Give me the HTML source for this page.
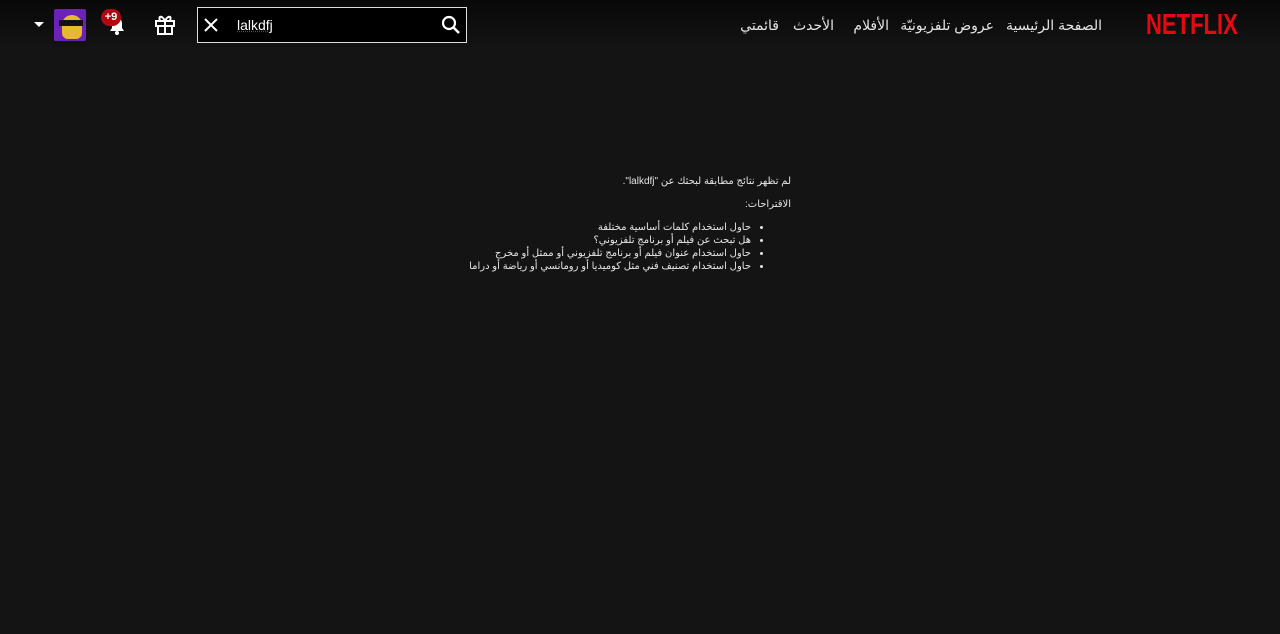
<!DOCTYPE html>
<html dir="rtl"><head><meta charset="utf-8"><style>
body{margin:0;width:1280px;height:634px;background:#141414;font-family:"Liberation Sans","DejaVu Sans",sans-serif;color:#e5e5e5;overflow:hidden;position:relative}
.hdr{position:absolute;top:0;left:0;width:1280px;height:50px;background:linear-gradient(#080808,#141414)}
.logo{position:absolute;right:42px;top:9px;color:#e50914;font-weight:bold;font-size:29px;font-family:"Liberation Sans Narrow","Liberation Sans",sans-serif;direction:ltr;transform:scaleX(0.76);transform-origin:right center}
.nav{position:absolute;top:17px;font-size:14px;color:#e5e5e5;white-space:nowrap}
.search{position:absolute;left:197px;top:7px;width:270px;height:36px;border:1px solid #ddd;background:#000;box-sizing:border-box}
.stext{position:absolute;left:39px;top:9px;color:#fff;font-size:14px;direction:ltr;text-decoration:underline dotted #e50914}
.msg{position:absolute;right:489px;top:175px;font-size:10px;line-height:13px;color:#e5e5e5;text-align:right}
ul{margin:10px 0 0;padding:0 40px 0 0;}
</style></head><body>
<div class="hdr"></div>
<div class="logo">NETFLIX</div>
<div class="nav" style="right:178px">الصفحة الرئيسية</div>
<div class="nav" style="right:286px">عروض تلفزيونيّة</div>
<div class="nav" style="right:391px">الأفلام</div>
<div class="nav" style="right:446px">الأحدث</div>
<div class="nav" style="right:501px">قائمتي</div>
<div class="search">
<svg style="position:absolute;left:5px;top:9px" width="16" height="16" viewBox="0 0 16 16"><path d="M2 2L14 14M14 2L2 14" stroke="#fff" stroke-width="2"/></svg>
<span class="stext">lalkdfj</span>
<svg style="position:absolute;right:5px;top:7px" width="20" height="20" viewBox="0 0 20 20"><circle cx="8" cy="8" r="6" stroke="#fff" stroke-width="2.2" fill="none"/><path d="M12.5 12.5L18 18" stroke="#fff" stroke-width="2.5"/></svg>
</div>
<svg style="position:absolute;left:154px;top:13px" width="22" height="22" viewBox="0 0 22 22" fill="none" stroke="#fff" stroke-width="2"><rect x="2" y="8" width="18" height="5"/><rect x="4" y="13" width="14" height="8"/><path d="M11 8V21M11 8C8 2 4 3 6 7M11 8C14 2 18 3 16 7"/></svg>
<svg style="position:absolute;left:106px;top:14px" width="22" height="22" viewBox="0 0 22 22"><path d="M4 17h14l-2-3V9a5 5 0 0 0-10 0v5z" fill="#fff"/><circle cx="11" cy="19" r="2" fill="#fff"/></svg>
<div style="position:absolute;left:101px;top:9px;width:20px;height:17px;border-radius:9px;background:#b20710;color:#fff;font-size:11px;font-weight:bold;text-align:center;line-height:17px;direction:ltr">+9</div>
<div style="position:absolute;left:54px;top:9px;width:32px;height:32px;background:#6a22b8;border-radius:2px;overflow:hidden"><div style="position:absolute;left:8px;top:6px;width:20px;height:24px;background:#e8b830;border-radius:10px 10px 6px 6px"></div><div style="position:absolute;left:5px;top:11px;width:24px;height:6px;background:#111"></div></div>
<div style="position:absolute;left:34px;top:22px;width:0;height:0;border-left:5px solid transparent;border-right:5px solid transparent;border-top:5px solid #fff"></div>
<div class="msg">
<div>لم تظهر نتائج مطابقة لبحثك عن "lalkdfj".</div>
<div style="margin-top:10px">الاقتراحات:</div>
<ul>
<li>حاول استخدام كلمات أساسية مختلفة</li>
<li>هل تبحث عن فيلم أو برنامج تلفزيوني؟</li>
<li>حاول استخدام عنوان فيلم أو برنامج تلفزيوني أو ممثل أو مخرج</li>
<li>حاول استخدام تصنيف فني مثل كوميديا أو رومانسي أو رياضة أو دراما</li>
</ul></div>
</body></html>
